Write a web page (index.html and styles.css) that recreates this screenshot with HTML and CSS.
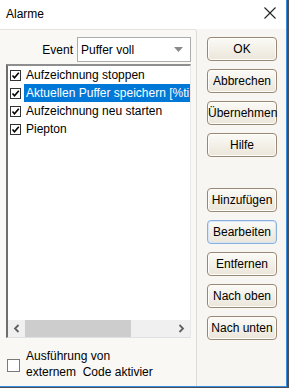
FILE: index.html
```html
<!doctype html>
<html lang="de">
  <head>
    <meta charset="UTF-8" />
    <title>Alarme</title>
    <link rel="stylesheet" href="styles.css">
  </head>
  <body>
    <div class="window">
      <div class="titlebar">
        <span class="title">Alarme</span>
        <svg class="close" width="12" height="12" viewBox="0 0 12 12">
          <path d="M0.5 0.5 L11.5 11.5 M11.5 0.5 L0.5 11.5" stroke="#222" stroke-width="1.1" fill="none" />
        </svg>
      </div>

      <div class="content">
        <div class="panel">
          <div class="event-row">
            <span class="event-label">Event</span>
            <div class="combo">
              <span>Puffer voll</span>
              <svg width="9" height="5" viewBox="0 0 9 5"><path d="M0 0 L9 0 L4.5 5 Z" fill="#8a8a8a" /></svg>
            </div>
          </div>

          <div class="listbox">
            <div class="items">
              <div class="item"><span class="check"></span><span class="label">Aufzeichnung stoppen</span></div>
              <div class="item selected"><span class="check"></span><span class="label">Aktuellen Puffer speichern [%ti</span></div>
              <div class="item"><span class="check"></span><span class="label">Aufzeichnung neu starten</span></div>
              <div class="item"><span class="check"></span><span class="label">Piepton</span></div>
            </div>
            <div class="hscroll">
              <svg class="arrow" width="7" height="9" viewBox="0 0 7 9"><path d="M5.5 1 L2 4.5 L5.5 8" stroke="#606060" stroke-width="1.8" fill="none" /></svg>
              <div class="track"><div class="thumb"></div></div>
              <svg class="arrow" width="7" height="9" viewBox="0 0 7 9"><path d="M1.5 1 L5 4.5 L1.5 8" stroke="#606060" stroke-width="1.8" fill="none" /></svg>
            </div>
          </div>

          <div class="extern">
            <span class="box"></span>
            <span class="extern-text">Ausführung von<br>externem&nbsp; Code aktivier</span>
          </div>
        </div>

        <div class="buttons">
          <button class="btn">OK</button>
          <button class="btn">Abbrechen</button>
          <button class="btn">Übernehmen</button>
          <button class="btn">Hilfe</button>
          <button class="btn group-start">Hinzufügen</button>
          <button class="btn focused">Bearbeiten</button>
          <button class="btn">Entfernen</button>
          <button class="btn">Nach oben</button>
          <button class="btn">Nach unten</button>
        </div>
      </div>
    </div>
  </body>
</html>
```

FILE: styles.css
```css
body {
  margin: 0;
  width: 289px;
  height: 388px;
  background: #4a4d52;
  font-family: "Liberation Sans", Arial, sans-serif;
  font-size: 12px;
  color: #000;
  overflow: hidden;
}
.window {
  width: 286px;
  height: 386px;
  border-right: 1px solid #3b8de0;
  border-bottom: 1px solid #3b8de0;
  background: #f7f6f2;
  display: flex;
  flex-direction: column;
}
.titlebar {
  height: 29px;
  background: #fff;
  display: flex;
  align-items: center;
  justify-content: space-between;
  padding: 0 10px 0 6px;
  flex-shrink: 0;
}
.title {
  font-size: 12px;
  margin-top: -2px;
}
.close {
  margin-top: -4px;
}
.content {
  flex: 1;
  display: flex;
}
.panel {
  width: 185px;
  flex-shrink: 0;
  border-top: 1px solid #e4e2dc;
  border-right: 1px solid #dedcd6;
  border-top-right-radius: 3px;
  padding: 7px 5px 0 6px;
  display: flex;
  flex-direction: column;
  background: #f9f8f5;
}
.event-row {
  display: flex;
  justify-content: flex-end;
  align-items: center;
  gap: 4px;
  height: 25px;
  margin-bottom: 2px;
}
.combo {
  width: 102px;
  height: 23px;
  border: 1px solid #acacac;
  background: #fff;
  display: flex;
  align-items: center;
  justify-content: space-between;
  padding: 0 7px 0 3px;
}
.combo span {
  font-size: 12px;
}
.listbox {
  height: 271px;
  border-top: 2px solid #8e8e8e;
  border-left: 2px solid #6e6e6e;
  border-bottom: 1px solid #e0e0e0;
  border-right: 1px solid #e8e8e8;
  background: #fff;
  display: flex;
  flex-direction: column;
}
.items {
  flex: 1;
  overflow: hidden;
}
.item {
  display: flex;
  align-items: center;
  height: 18px;
  white-space: nowrap;
}
.check {
  width: 9px;
  height: 9px;
  margin: 0 3px 0 2px;
  border: 1px solid #333;
  background: #fff url("data:image/svg+xml;utf8,<svg xmlns='http://www.w3.org/2000/svg' width='9' height='9'><path d='M1.5 4.5 L3.5 6.8 L7.8 1.8' stroke='black' stroke-width='1.6' fill='none'/></svg>") no-repeat center;
  flex-shrink: 0;
}
.label {
  flex: 1;
  height: 18px;
  line-height: 18px;
  padding-left: 2px;
  overflow: hidden;
}
.selected .label {
  background: #0078d7;
  color: #fff;
}
.hscroll {
  height: 17px;
  background: #f0f0f0;
  display: flex;
  align-items: center;
}
.arrow {
  margin: 0 5px;
  flex-shrink: 0;
}
.track {
  flex: 1;
  height: 17px;
  display: flex;
}
.thumb {
  width: 106px;
  height: 17px;
  background: #cdcdcd;
}
.extern {
  display: flex;
  align-items: center;
  margin-top: 10px;
}
.box {
  width: 11px;
  height: 11px;
  border: 1px solid #7a7a7a;
  background: #fff;
  margin: 3px 6px 0 1px;
}
.extern-text {
  line-height: 16px;
  font-size: 12px;
}
.buttons {
  display: flex;
  flex-direction: column;
  gap: 8px;
  padding: 8px 0 0 10px;
}
.btn {
  width: 70px;
  height: 24px;
  padding: 0;
  border: 1px solid #9a8877;
  border-radius: 4px;
  background: linear-gradient(#fbfaf6, #ebe6da);
  font-family: "Liberation Sans", Arial, sans-serif;
  font-size: 12px;
  color: #000;
  box-shadow: inset 0 0 0 1px #fffefa;
  white-space: nowrap;
}
.group-start {
  margin-top: 23px;
}
.focused {
  border-color: #8ab0e0;
  box-shadow: inset 0 0 0 1px #d6e6f8;
}
```
